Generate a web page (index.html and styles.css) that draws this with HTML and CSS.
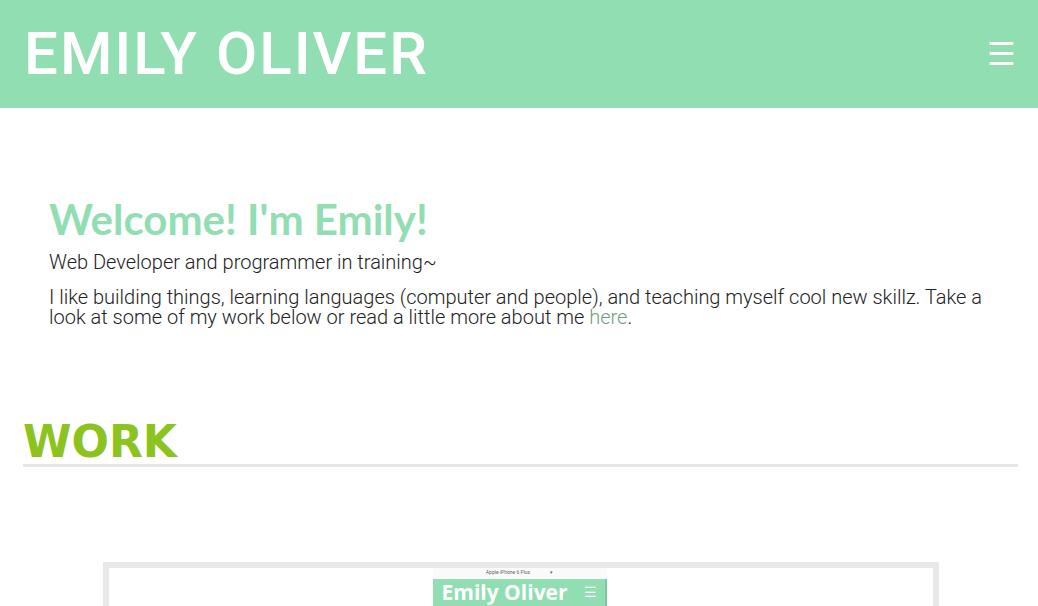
FILE: index.html
```html
<!DOCTYPE html>
<html>
<head>
<meta charset="utf-8">
<link rel="stylesheet" href="styles.css">
</head>
<body>
<header class="top">
  <h1 class="brand">EMILY OLIVER</h1>
  <span class="menu">☰</span>
</header>
<section class="intro">
  <h2 class="welcome">Welcome! I'm Emily!</h2>
  <p class="tag">Web Developer and programmer in training~</p>
  <p class="about">I like building things, learning languages (computer and people), and teaching myself cool new skillz. Take a look at some of my work below or read a little more about me <a href="#" class="link">here</a>.</p>
</section>
<section class="work">
  <h2 class="work-title">WORK</h2>
  <div class="shot">
    <div class="phone">
      <div class="phone-bar"><span>Apple iPhone 6 Plus</span><span>&#x25BE;</span></div>
      <div class="phone-head"><span class="phone-name">Emily Oliver</span><span class="phone-menu">☰</span></div>
    </div>
  </div>
</section>
</body>
</html>
```
FILE: styles.css
```css
html, body { margin: 0; padding: 0; background: #fff; }
body { font-family: Roboto, "Liberation Sans", sans-serif; overflow: hidden; }
.top {
  height: 108px;
  background: #92deb3;
  display: flex;
  align-items: center;
  justify-content: space-between;
  padding: 0 22px 0 24px;
  box-sizing: border-box;
}
.brand {
  margin: 0;
  font-family: Roboto, sans-serif;
  font-weight: 500;
  font-size: 60px;
  letter-spacing: 2px;
  color: #fff;
  line-height: 1;
}
.menu { color: #fff; font-size: 32px; line-height: 1; }
.intro { padding: 89px 40px 0 49px; }
.welcome {
  margin: 0 0 11px;
  font-family: Lato, sans-serif;
  font-weight: 700;
  font-size: 42px;
  color: #92deb3;
  line-height: 44px;
}
.tag, .about {
  font-family: Roboto, sans-serif;
  font-weight: 300;
  font-size: 20px;
  color: #222;
  line-height: 20px;
  margin: 0 0 15px;
}
.link { color: #6f9e80; text-decoration: none; }
.work { margin: 94px 20px 0 23px; }
.work-title {
  margin: 0;
  font-family: "DejaVu Sans", Verdana, sans-serif;
  font-weight: 700;
  font-size: 44px;
  color: #8cc31e;
  line-height: 42px;
  border-bottom: 3px solid #e6e6e6;
  padding-bottom: 1px;
}
.shot {
  margin: 95px 79px 0 80px;
  height: 200px;
  border: 6px solid #e8e8e8;
  display: flex;
  justify-content: center;
  padding-left: 3px;
}
.phone { width: 174px; margin-left: -6px; }
.phone-bar {
  height: 11px;
  font-size: 5px;
  line-height: 8px;
  color: #666;
  display: flex;
  justify-content: center;
  gap: 20px;
  background: #fafafa;
}
.phone-head {
  background: #92deb3;
  height: 40px;
  border-right: 2px solid #7fc79e;
  display: flex;
  align-items: flex-start;
  padding: 0 8px 0 9px;
  justify-content: space-between;
}
.phone-name { color: #fff; font-family: "Open Sans", sans-serif; font-weight: 700; font-size: 21px; line-height: 26px; }
.phone-menu { color: #fff; font-size: 14px; line-height: 26px; }
```
